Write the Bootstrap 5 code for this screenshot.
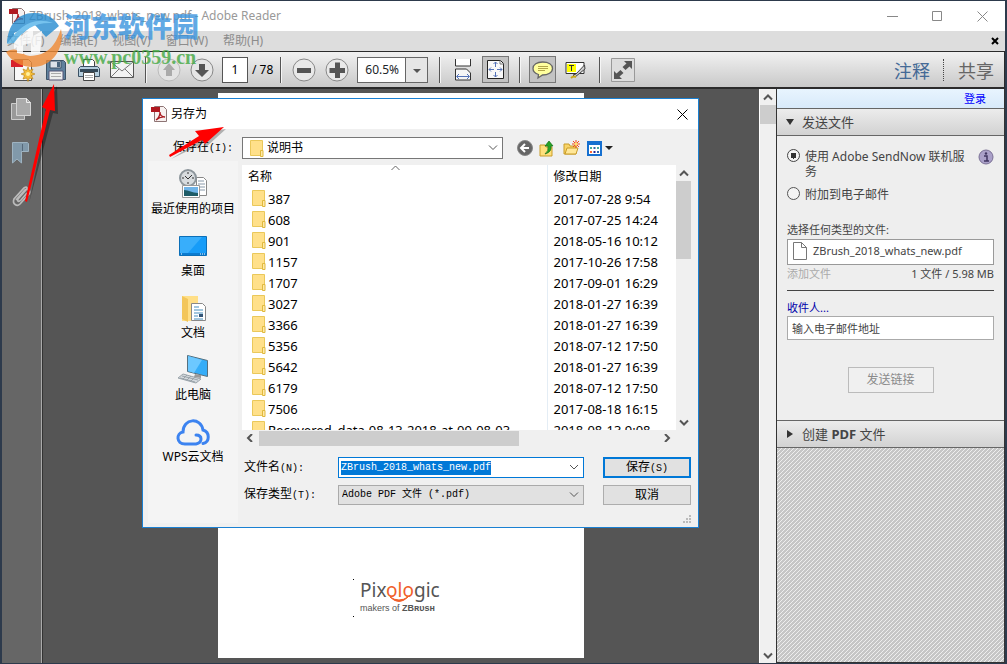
<!DOCTYPE html>
<html lang="zh-CN">
<head>
<meta charset="utf-8">
<meta name="viewport" content="width=device-width, initial-scale=1">
<title>ZBrush_2018_whats_new.pdf - Adobe Reader</title>
<link href="https://cdn.jsdelivr.net/npm/bootstrap@5.3.0/dist/css/bootstrap.min.css" rel="stylesheet">
<style>
:root{--ui:"Noto Sans","Noto Sans CJK SC",sans-serif;--cjk:"Noto Sans CJK SC",sans-serif;--mono:"Liberation Mono","Noto Sans CJK SC",monospace}
body{font-family:var(--ui);font-size:12px;line-height:16px;color:#000;background:#2d3a4c}
svg{display:block;flex:none}
button{font-family:inherit}
.app{min-height:100vh;padding:1px 2px 1px 2px}
.title-bar{height:30px;background:#fff;color:#999;padding-left:7px}
.title-bar .caption{font-size:12px}
.win-btn{width:45px;height:29px;border:0;background:none;padding:0;display:grid;place-items:center}
.menu-bar{height:20px;background:#ddd;padding:0 6px 0 5px}
.menu-list{gap:15px}
.menu-bar a{color:#8c8c8c;text-decoration:none;font-size:12px}
.tool-bar{height:38px;border:1px solid #2b2b2b;border-width:1px 1px 2px 0;background:linear-gradient(#f1f1f1,#c9c9c9);padding-left:4px}
.tool{width:33px;height:33px;border:0;background:none;padding:0;display:grid;place-items:center;flex:none}
.tool.pressed svg{background:#c3c3c3;outline:1px solid #777}
.sep{width:14px;height:26px;flex:none;display:flex;justify-content:center}
.sep::before{content:"";width:1px;background:#555;box-shadow:1px 0 #f6f6f6}
.page-no{width:26px;height:26px;border:1px solid #555;border-radius:0;background:#fff;text-align:center;font-size:12px;padding:0}
.zoom-sel{width:71px;height:26px;border:1px solid #666;border-radius:0;font-size:12px;line-height:16px;padding:0 0 0 7px;background:#fff url("data:image/svg+xml,%3Csvg xmlns='http://www.w3.org/2000/svg' width='22' height='24'%3E%3Cpath fill='%23e6e6e6' d='M0 0h22v24H0z'/%3E%3Cpath stroke='%23666' d='M.5 0v24'/%3E%3Cpath fill='%23555' d='M8 11h8l-4 4z'/%3E%3C/svg%3E") no-repeat right center;background-size:22px 24px}
.mode{font:18px/22px var(--cjk);border:0;background:none;color:#666;padding:0 10px 0 14px}
.mode.active{color:#456a96;padding-right:13px}
.mode + .mode{border-left:1px dotted #444}
.nav-rail{width:40px;background:#666;border-right:1px solid #aaa;padding-top:9px}
.nav-rail button{width:37px;height:43px;padding:0;border:0;background:none;display:flex;justify-content:center;align-items:flex-start}
.canvas{background:#555;border-left:1px solid #333;padding:4px 0 5px;min-width:0}
.sheet{width:366px;background:#fff;padding-bottom:41px}
.logo-box{width:96px;padding:0 5px 4px 7px;position:relative}
.logo-box::before,.logo-box::after{content:"";position:absolute;left:0;width:1px;height:1px;background:#000}
.logo-box::before{top:0}.logo-box::after{bottom:0}
.logo-word{font-size:19px;line-height:22px;color:#555;margin-bottom:2px}
.logo-word b{font-weight:400;color:#f0602a}
.logo-sub{font:8px/10px "Liberation Sans",sans-serif;font-size:9px;color:#555;white-space:nowrap}
.bar-v{background:#f0f0f0}
.doc-scroll{width:17px;border-left:1px solid #fff}
.thumb{background:#cdcdcd}
.arrow{display:grid;place-items:center;width:100%;height:16px;flex:none}
.side{width:229px;border:1px solid #333;border-top:0;color:#444;background:#eee}
.sign-in{height:19px;background:linear-gradient(#e8f4fe,#d8eafa);text-align:right;padding:2px 18px 0 0;font-size:11px}
.sign-in a{color:#00f;text-decoration:none}
.sec-head{height:28px;border:0;border-top:1px solid #666;border-bottom:1px solid #666;background:linear-gradient(#ececec,#d2d2d2);color:#444;font-size:13px;width:100%;padding:0 0 0 9px;text-align:left}
.sec-body{background:#eee;padding:13px 10px 27px}
.opt{position:relative;min-height:0;margin:0;padding:0 0 0 18px;line-height:15px}
.opt .form-check-input{width:13px;height:13px;margin:0 0 0 -18px;border:1px solid #555;background-color:#f4f4f4;box-shadow:none}
.opt .form-check-input:checked{border-color:#444;background:#f4f4f4 radial-gradient(circle,#333 0 3px,#f4f4f4 3px)}
.small-cjk{font-size:11px;line-height:16px}
.file-box{height:26px;margin:1px 0;background:#fff;border:1px solid #999;padding:0 5px 2px;gap:6px;font-size:11px}
.side hr{margin:8px 0 9px;opacity:1;border-top:1px solid #444}
.mail{height:24px;border:1px solid #aaa;border-radius:0;font-size:11px;padding:0 4px;width:100%;color:#333}
.mail::placeholder{color:#444;opacity:1}
.send{width:86px;height:26px;border:1px solid #bbb;background:#f0f0f0;color:#8a8a8a;font-size:12px;padding:0}
.send-row{padding-top:27px}
.hatch{background:linear-gradient(135deg,#eee 12.5%,#c6c6c6 12.5% 50%,#eee 50% 62.5%,#c6c6c6 62.5%) 0 0/4px 4px}
/* save dialog floats over the document window */
.dlg{position:absolute;left:142px;top:98px;width:557px;border:1px solid #1a80d2;background:#f0f0f0;z-index:5}
.dlg-title{height:30px;background:#fff;padding-left:8px}
.dlg-main{padding:0 7px 4px 5px}
.look{height:32px;padding-top:6px}
.look-label{width:94px;padding-right:9px;text-align:right}
.m{font-family:var(--mono);font-size:10px}
.folder-sel{width:261px;height:22px;border:1px solid #777;background:#fff;position:relative}
.folder-sel svg{position:absolute;left:7px;top:2px}
.dlg select.form-select{height:100%;border-radius:0;font-size:12px;line-height:16px;color:#000;padding:0 20px 0 24px;border:0;background:transparent url("data:image/svg+xml,%3Csvg xmlns='http://www.w3.org/2000/svg' width='10' height='6'%3E%3Cpath d='M1 .5l4 4 4-4' fill='none' stroke='%23555'/%3E%3C/svg%3E") no-repeat right 4px center;background-size:10px 6px}
.dlg .type-sel select.form-select{font:10px/14px var(--mono);padding:0 20px 0 3px;border:1px solid #aaa;background-color:#e1e1e1}
.ico-btn{width:24px;height:22px;border:0;padding:0;background:none;display:grid;place-items:center}
.places{width:90px;background:#f4f4f4;padding-top:7px}
.place{height:62px;width:100%;border:0;background:none;padding:0;display:flex;flex-direction:column;align-items:center;gap:1px;white-space:nowrap;color:#000;line-height:16px}
.list-col{min-width:0}
.files{height:265px;background:#fff;overflow:hidden}
.files table{width:100%;table-layout:fixed;border-collapse:collapse}
.files th{height:23px;font-weight:400;padding:0 6px}
.files td{height:21px;font-size:13px;line-height:16px;padding:0 6px;white-space:nowrap}
.files td:first-child{padding-left:10px}
.files td svg{display:inline-block;vertical-align:-3px;margin-right:2px}
.files tr > :nth-child(2){border-left:1px solid #e4edf5}
.list-scroll{width:15px;flex:none}
.fields{display:grid;grid-template-columns:96px 1fr 88px;grid-template-rows:21px 20px;row-gap:7px;padding-top:11px;align-items:center}
.fields label{padding-left:2px}
.fields > div{margin-right:19px;height:100%}
.name-box{border:1px solid #0078d7;background:#fff;display:flex;align-items:center}
.name-box input{flex:1;min-width:0;border:0;outline:0;padding:0 2px;font:10px/14px var(--mono);height:14px}
.name-box input::selection{background:#0078d7;color:#fff}
.fields button{height:100%;border:1px solid #adadad;background:#e1e1e1;padding:0;line-height:16px}
.fields button.default{border:2px solid #0078d7}
.grip{padding-top:10px}
.over{position:absolute;pointer-events:none;z-index:9}
.mark-layer{left:4px;top:9px;opacity:.8}
.mark-name{font:900 27px/34px "Noto Sans CJK SC",sans-serif;color:#3a94de}
.mark-url{font:700 20px/20px "Liberation Serif",serif;color:#44a944}
</style>
</head>
<body>
<svg width="0" height="0" class="position-absolute" aria-hidden="true">
  <defs>
    <symbol id="folder" viewBox="0 0 14 17"><path d="M.5.5h12v15H.5z" fill="#ffe08a" stroke="#eac85a"/><path d="M10.500 10.500h2.500v6h-2.500z" fill="#ffe9a8" stroke="#e0b93d"/></symbol>
    <symbol id="pdf" viewBox="0 0 16 16"><path d="M3.500.5h9l3 3v12h-12z" fill="#f7f1f0" stroke="#8d7474"/><path d="M0 1h9v5H0z" fill="#b01820"/><path d="M5 14c3-2 4-5 4-8 0 3 2 5 5 5-3-.5-6 .5-9 3z" fill="none" stroke="#a81a20" stroke-width="1.300"/></symbol>
    <symbol id="up" viewBox="0 0 10 7"><path d="M1 5.500l4-4 4 4" fill="none" stroke="#555" stroke-width="2"/></symbol>
    <symbol id="down" viewBox="0 0 10 7"><path d="M1 1.500l4 4 4-4" fill="none" stroke="#555" stroke-width="2"/></symbol>
  </defs>
</svg>

<div class="app d-flex flex-column position-relative">
  <header class="title-bar d-flex align-items-center">
    <svg width="16" height="16"><use href="#pdf"/></svg>
    <span class="caption ms-1 me-auto">ZBrush_2018_whats_new.pdf - Adobe Reader</span>
    <button class="win-btn" aria-label="最小化"><svg width="11" height="11"><path d="M0 5.500h11" stroke="#888"/></svg></button>
    <button class="win-btn" aria-label="最大化"><svg width="11" height="11"><path d="M.5.5h9v9h-9z" fill="none" stroke="#888"/></svg></button>
    <button class="win-btn" aria-label="关闭"><svg width="11" height="11"><path d="M.5.500l10 10m0-10l-10 10" stroke="#888"/></svg></button>
  </header>
  <nav class="menu-bar d-flex align-items-center">
    <div class="menu-list d-flex me-auto"><a href="#">文件(F)</a><a href="#">编辑(E)</a><a href="#">视图(V)</a><a href="#">窗口(W)</a><a href="#">帮助(H)</a></div>
    <a href="#" aria-label="关闭文档"><svg width="8" height="8"><path d="M1 1l6 6m0-6L1 7" stroke="#000" stroke-width="2"/></svg></a>
  </nav>

  <div class="tool-bar d-flex align-items-center">
    <button class="tool" aria-label="创建"><svg width="24" height="24"><path d="M3.500 1.500h14l3 3v18h-17z" fill="#f8f8f8" stroke="#555"/><path d="M0 2h12v7H0z" fill="#d8222c"/><path d="M17 9l1.500 3.500L22 11l-1.500 3.500L24 16l-3.500 1.500L22 21l-3.500-1L17 23.500 15.500 20 12 21l1.500-3.500L10 16l3.500-1.500L12 11l3.500 1.500z" fill="#f4bd3a" stroke="#b47a10" stroke-width=".6"/><circle cx="17" cy="16" r="2" fill="#fff0a0"/></svg></button>
    <button class="tool" aria-label="保存"><svg width="22" height="22"><path d="M1.500 1.500h17l2 2v17h-19z" fill="#5f819d" stroke="#3c5267"/><path d="M5 2h11v7H5z" fill="#dde3e8" stroke="#3c5267"/><path d="M12 3h3v5h-3z" fill="#4a657c"/><path d="M4 12h14v9H4z" fill="#eee" stroke="#557"/><path d="M6 14.500h10m-10 3h10" stroke="#aaa"/></svg></button>
    <button class="tool" aria-label="打印"><svg width="22" height="24"><path d="M5.500 9v-7.500h9l2 2V9" fill="#fff" stroke="#444"/><path d="M2.500 8.500h17l2 2v8h-21v-8z" fill="#b4cddd" stroke="#3b5063"/><path d="M2 11h18v3H2z" fill="#344959"/><path d="M5.500 14.500h11v8h-11z" fill="#fff" stroke="#444"/><path d="M7 17.500h8m-8 2h8" stroke="#aaa"/></svg></button>
    <button class="tool" aria-label="电子邮件"><svg width="24" height="18"><path d="M.5.500h23v16H.5z" fill="#f3f3f3" stroke="#555"/><path d="M1 1l11 9L23 1M1 16l8-8m14 8l-8-8" fill="none" stroke="#777"/></svg></button>
    <span class="sep"></span>
    <button class="tool" disabled aria-label="上一页"><svg width="24" height="24"><circle cx="12" cy="12" r="11" fill="#e3e3e3" stroke="#bbb"/><path d="M12 5l6 7h-3v6H9v-6H6z" fill="#aaa"/></svg></button>
    <button class="tool" aria-label="下一页"><svg width="24" height="24"><circle cx="12" cy="12" r="11" fill="#e6e6e6" stroke="#888"/><path d="M12 19l-7-7h4V6h6v6h4z" fill="#555"/></svg></button>
    <input class="page-no ms-1" value="1" aria-label="页码"><span class="ms-1">/ 78</span>
    <span class="sep"></span>
    <button class="tool" aria-label="缩小"><svg width="24" height="24"><circle cx="12" cy="12" r="11" fill="#e9e9e9" stroke="#888"/><path d="M5 10h14v5H5z" fill="#555"/></svg></button>
    <button class="tool" aria-label="放大"><svg width="24" height="24"><circle cx="12" cy="12" r="11" fill="#e9e9e9" stroke="#888"/><path d="M4.500 10H10V4.500h5V10h5v5h-5v5h-5v-5H4.500z" fill="#555"/></svg></button>
    <select class="form-select zoom-sel mx-1" aria-label="缩放"><option>60.5%</option></select>
    <span class="sep"></span>
    <button class="tool" aria-label="适合宽度"><svg width="18" height="22"><path d="M1.500 0v7h15V0" fill="#fff" stroke="#333"/><path d="M1.500 21v-11h11l4 4v7z" fill="#f6f6f6" stroke="#333"/><path d="M3 17.500h12M5 15l-2.500 2.500L5 20m8-5l2.500 2.500L13 20" fill="none" stroke="#5573b8"/></svg></button>
    <button class="tool pressed" aria-label="适合页面"><svg width="25" height="25"><path d="M4.500 3.500h13l3 3v15h-16z" fill="#f8f8f8" stroke="#222"/><path d="M17 3.500V7h3.500" fill="none" stroke="#777"/><path d="M12.500 5v5m0 5v5M6 12.500h5m3 0h5M10.500 7l2-2 2 2m-4 11l2 2 2-2M8 10.500l-2 2 2 2m9-4l2 2-2 2" fill="none" stroke="#5573b8"/></svg></button>
    <span class="sep"></span>
    <button class="tool pressed" aria-label="注释"><svg width="25" height="25"><path d="M12.500 5c6 0 10 2.500 10 6.500S18 18 12.500 18L8 21l.500-3.500C5 16.500 3 14.500 3 11.500 3 7.500 7 5 12.500 5z" fill="#ffff9e" stroke="#666" stroke-width="1.300"/><path d="M8 9.500h10m-10 2h10m-10 2h7" stroke="#b3a648"/></svg></button>
    <button class="tool" aria-label="高亮文本"><svg width="22" height="20"><path d="M1 2.500h18v11H1z" fill="#fff" stroke="#333"/><path d="M2 4h9v8H2z" fill="#ff0"/><path d="M4 5.500h5m-2.500 0V11" stroke="#333"/><path d="M19.500 5L11 14l-3 1 2 2 10-8z" fill="#ccc" stroke="#444"/><path d="M6 18c2-2 3-2 5-1" fill="none" stroke="#caa817" stroke-width="2"/></svg></button>
    <span class="sep"></span>
    <button class="tool" aria-label="全屏"><svg width="24" height="24"><path d="M.5.500h23v23H.5z" fill="#ddd" stroke="#999"/><path d="M13 3h8v8l-2.500-2.500-4 3.500-3-3 4-3.500zM3 13l2.500 2.500 4-3.500 3 3-4 3.500L11 21H3z" fill="#555"/></svg></button>
    <div class="ms-auto d-flex"><button class="mode active">注释</button><button class="mode">共享</button></div>
  </div>

  <div class="d-flex flex-fill">
    <aside class="nav-rail">
      <button aria-label="页面缩略图"><svg width="22" height="23"><path d="M1.500 5.500h13v16h-13z" fill="#999" stroke="#ccc"/><path d="M6.500.5h10l4 4v13h-14z" fill="#aaa" stroke="#d4d4d4"/><path d="M16.500.5v4h4" fill="none" stroke="#eee"/></svg></button>
      <button aria-label="书签"><svg width="20" height="24"><path d="M1.500 1.500h15l1 1v8h-7V22l-4.500-4-4.500 4z" fill="#8199aa" stroke="#9eb3c1"/><path d="M11.500 10V3" stroke="#56697a"/></svg></button>
      <button aria-label="附件"><svg width="22" height="24"><path d="M6 16L15 6c3-2 6 1 4 4l-9 10c-3 3-8 0-6-5L14 4c3-2 4 0 2 2L8 15c-1 3 1 3 3 1l6-7" fill="none" stroke="#bbb" stroke-width="1.700"/></svg></button>
    </aside>
    <main class="canvas flex-fill d-flex justify-content-center">
      <article class="sheet d-flex flex-column justify-content-end align-items-center">
        <div class="logo-box">
          <div class="logo-word position-relative">Pix<b>olo</b>gic<svg class="position-absolute top-50 start-0" width="80" height="13"><path d="M30 7q9 6 18 0-9 9-18 0z" fill="#f0602a" stroke="#f0602a"/></svg></div>
          <div class="logo-sub">makers of <b>ZBʀᴜsʜ</b></div>
        </div>
      </article>
    </main>
    <div class="doc-scroll bar-v d-flex flex-column">
      <span class="arrow"><svg width="10" height="7"><use href="#up"/></svg></span>
      <div class="thumb" style="height:19px"></div>
      <span class="arrow mt-auto"><svg width="10" height="7"><use href="#down"/></svg></span>
    </div>

    <aside class="side d-flex flex-column">
      <div class="sign-in"><a href="#">登录</a></div>
      <button class="sec-head d-flex align-items-center gap-2"><svg width="8" height="8"><path d="M0 1h8L4 7z" fill="#333"/></svg>发送文件</button>
      <form class="sec-body">
        <div class="d-flex">
          <div class="opt form-check flex-fill"><input class="form-check-input" type="radio" name="how" id="how1" checked><label for="how1">使用 Adobe SendNow 联机服务</label></div>
          <svg class="ms-2" width="16" height="16"><circle cx="8" cy="8" r="7" fill="#aaa0c8" stroke="#7a7095"/><circle cx="8" cy="4.500" r="1.200" fill="#403560"/><path d="M6 7h3v5m-3 0h5" fill="none" stroke="#403560" stroke-width="1.500"/></svg>
        </div>
        <div class="opt form-check mt-2"><input class="form-check-input" type="radio" name="how" id="how2"><label for="how2">附加到电子邮件</label></div>
        <div class="small-cjk mt-3 pt-1">选择任何类型的文件:</div>
        <div class="file-box d-flex align-items-center"><svg width="14" height="18"><path d="M.5.500h8l5 5v12H.5z" fill="#fff" stroke="#777"/><path d="M8.500.5v5h5" fill="none" stroke="#777"/></svg>ZBrush_2018_whats_new.pdf</div>
        <div class="small-cjk d-flex justify-content-between"><span style="color:#aaa">添加文件</span><span>1 文件 / 5.98 MB</span></div>
        <hr>
        <label class="small-cjk d-block" for="to"><a href="#" class="text-decoration-none" style="color:#00a">收件人...</a></label>
        <input class="mail" id="to" placeholder="输入电子邮件地址">
        <div class="send-row text-center"><button type="button" class="send">发送链接</button></div>
      </form>
      <button class="sec-head d-flex align-items-center gap-2"><svg width="8" height="8"><path d="M1 0v8l6-4z" fill="#333"/></svg><span>创建 <b>PDF</b> 文件</span></button>
      <div class="hatch flex-fill"></div>
    </aside>
  </div>

  <section class="dlg" role="dialog" aria-label="另存为">
    <div class="dlg-title d-flex align-items-center">
      <svg width="16" height="16"><use href="#pdf"/></svg><span class="ms-1 me-auto">另存为</span>
      <button class="win-btn" style="width:32px" aria-label="关闭"><svg width="11" height="11"><path d="M.5.500l10 10m0-10l-10 10" stroke="#000"/></svg></button>
    </div>
    <div class="dlg-main">
      <div class="look d-flex align-items-center">
        <label class="look-label" for="dir">保存在<span class="m">(I):</span></label>
        <div class="folder-sel"><svg width="14" height="17"><use href="#folder"/></svg><select class="form-select" id="dir"><option>说明书</option></select></div>
        <button class="ico-btn ms-2 ps-1" aria-label="后退"><svg width="16" height="16"><circle cx="8" cy="8" r="7.500" fill="#666" stroke="#888"/><path d="M8 4L4 8l4 4M4 8h8" fill="none" stroke="#fff" stroke-width="2"/></svg></button>
        <button class="ico-btn" aria-label="向上"><svg width="16" height="17"><path d="M1 5h5l1 2h6v9H1z" fill="#ffe07c" stroke="#c99c28"/><path d="M6 14q4-3 3-8H6l4-5 4 5h-2q1 6-6 8z" fill="#25a525" stroke="#176d17" stroke-width=".7"/></svg></button>
        <button class="ico-btn" aria-label="新建文件夹"><svg width="17" height="16"><path d="M1 4h5l1 2h6v8H1z" fill="#f8d469" stroke="#c99c28"/><path d="M2 14l2-6h11l-2 6z" fill="#ffe798" stroke="#c99c28"/><path d="M13 0v8m-4-4h8m-7-3l6 6m0-6l-6 6" stroke="#f04a20"/><circle cx="13" cy="4" r="1.500" fill="#ffe36a"/></svg></button>
        <button class="ico-btn ms-1 w-auto" aria-label="视图"><svg width="26" height="15"><path d="M1 1h13v13H1z" fill="#fff" stroke="#1670d0" stroke-width="2"/><path d="M0 0h15v4H0z" fill="#1670d0"/><path d="M3 6h2v2H3zm7 0h2v2h-2z" fill="#4a9"/><path d="M6.500 6h2v2h-2zM10 10h2v2h-2z" fill="#36a"/><path d="M3 10h2v2H3z" fill="#f63"/><path d="M6.500 10h2v2h-2z" fill="#229"/><path d="M18 5h8l-4 4z" fill="#222"/></svg></button>
      </div>
      <div class="d-flex">
        <div class="places flex-shrink-0">
          <button class="place"><svg width="32" height="32"><path d="M19.500 9.500h7l3 3v15h-10z" fill="#fff" stroke="#888"/><path d="M21 13h6m-6 3h7m-7 3h7m-7 3h7" stroke="#89a"/><circle cx="11" cy="10" r="8" fill="#d8dcdf" stroke="#8d969c" stroke-width="2"/><path d="M11 4v2m0 8v2M5 10h2m8 0h2m-9-2l3 3 4-4" fill="none" stroke="#333"/><path d="M5.500 17.500h17v12h-17z" fill="#fff" stroke="#999"/><path d="M7 19h14v9H7z" fill="#70b4e8"/><path d="M7 22c5 0 8 3 14 3v3H7z" fill="#1d5b66"/></svg><span>最近使用的项目</span></button>
          <button class="place"><svg width="32" height="32"><path d="M2.500 6.500h27v19h-27z" fill="#169cf8" stroke="#0b6fb8"/><path d="M3 7h22L11 23H3z" fill="#38aefb"/><path d="M3 23h26v2H3z" fill="#0a7bd0"/><path d="M4 24h2m17 0h5" stroke="#fff" stroke-dasharray="1 1"/></svg><span>桌面</span></button>
          <button class="place"><svg width="32" height="32"><path d="M5 4h16v24l-6 1H5z" fill="#ffdf87"/><path d="M5 4l6 3v23l-6-3z" fill="#f3c65a"/><path d="M14.500 11.500h11l3 3v14h-14z" fill="#fff" stroke="#888"/><path d="M17 15h5m-5 3h9m-9 3h9m-9 3h4m-4 3h9" stroke="#468fbd"/><path d="M22 22h4v3h-4z" fill="#357"/></svg><span>文档</span></button>
          <button class="place"><svg width="32" height="32"><path d="M10.500 1.500l20 5v16l-20-5z" fill="#35adf8" stroke="#55707f"/><path d="M11 2l14 4-8 13-6-2z" fill="#6cc8ff"/><path d="M18 20l-1 3 7 1v-3z" fill="#999"/><path d="M6 20l18 5-5 4-18-5z" fill="#d5dade" stroke="#9aa4aa"/><path d="M5 22l16 4M3 24l15 4M10 21l-4 4m8-3l-4 4m8-3l-4 4" stroke="#9aa4aa"/></svg><span>此电脑</span></button>
          <button class="place"><svg width="34" height="32"><path d="M17 28H9C0 28 0 17 7 16 7 2 25 1 27 14c7 2 7 12 0 13.500M14 28h6q5-1 5-5t-5-4" fill="none" stroke="#3c83f0" stroke-width="3" stroke-linecap="round"/></svg><span>WPS云文档</span></button>
        </div>
        <div class="flex-fill ms-1 mt-1">
          <div class="d-flex">
            <div class="list-col flex-fill">
              <div class="files">
                <table>
                  <colgroup><col><col style="width:129px"></colgroup>
                  <thead><tr><th>名称</th><th>修改日期</th></tr></thead>
                  <tbody id="rows"></tbody>
                </table>
              </div>
              <div class="bar-v d-flex align-items-center">
                <svg class="m-1" width="9" height="8"><path d="M6 0L2 4l4 4" fill="none" stroke="#555" stroke-width="2"/></svg>
                <div class="thumb" style="width:60%;height:15px"></div>
                <svg class="ms-auto me-1" width="9" height="8"><path d="M2 0l4 4-4 4" fill="none" stroke="#555" stroke-width="2"/></svg>
              </div>
            </div>
            <div class="list-scroll bar-v d-flex flex-column mb-3">
              <span class="arrow"><svg width="10" height="7"><use href="#up"/></svg></span>
              <div class="thumb" style="height:78px"></div>
              <span class="arrow mt-auto"><svg width="10" height="7"><use href="#down"/></svg></span>
            </div>
          </div>
          <form class="fields">
            <label for="fn">文件名<span class="m">(N):</span></label>
            <div class="name-box"><input id="fn" value="ZBrush_2018_whats_new.pdf"><svg class="me-1" width="10" height="7"><path d="M1 1l4 4 4-4" fill="none" stroke="#555"/></svg></div>
            <button type="button" class="default">保存<span class="m">(S)</span></button>
            <label for="ft">保存类型<span class="m">(T):</span></label>
            <div class="type-sel"><select class="form-select" id="ft"><option>Adobe PDF 文件 (*.pdf)</option></select></div>
            <button type="button">取消</button>
          </form>
          <div class="grip d-flex justify-content-end"><svg width="8" height="8"><path d="M6 0h2v2H6zM3 3h2v2H3zm3 0h2v2H6zM0 6h2v2H0zm3 0h2v2H3zm3 0h2v2H6z" fill="#bbb"/></svg></div>
        </div>
      </div>
    </div>
    <svg class="over" style="left:248px;top:66px" width="9" height="6"><path d="M.5 5l4-4 4 4" fill="none" stroke="#666"/></svg>
  </section>

  <div class="over mark-layer d-flex">
    <svg width="60" height="60"><path d="M3 34C4 15 15 3 31 4c11 0 19 5 24 13L42 28 30 15 8 33z" fill="#268cd0"/><path d="M2 43c12-7 14 3 24 4 17-1 25-9 31-27 4 18-8 38-28 38C17 58 7 52 2 43z" fill="#f08a34"/><path d="M10 40V24l7-3v6l12-8v8l9-5-2 22-9 1V34l-8 2v9l-6-1v-6z" fill="#fff"/><path d="M3 35C15 18 28 7 49 14 31 13 20 20 10 34z" fill="#55b4ea"/></svg>
    <div><div class="mark-name">河东软件园</div><div class="mark-url mt-1">www.pc0359.cn</div></div>
  </div>
  <svg class="over" style="left:16px;top:82px" width="50" height="124"><path d="M10 119L29 28l-3-1L38 2l1 28-5-1z" fill="#0005" transform="translate(3 2)"/><path d="M9 119L30 27l-4-2L38 2l1 27-5-1-23 92z" fill="#f00"/></svg>
  <svg class="over" style="left:165px;top:122px" width="66" height="42"><path d="M4 34l33-21-4-5 26-4-20 18-2-4z" fill="#0004" transform="translate(2 3)"/><path d="M4 33l30-19-4-5 29-4-19 17-3-4-32 17z" fill="#f00"/></svg>
</div>
<script src="https://cdn.jsdelivr.net/npm/bootstrap@5.3.0/dist/js/bootstrap.bundle.min.js"></script>
<script>
const files = [["387","2017-07-28 9:54"],["608","2017-07-25 14:24"],["901","2018-05-16 10:12"],["1157","2017-10-26 17:58"],["1707","2017-09-01 16:29"],["3027","2018-01-27 16:39"],["3366","2018-01-27 16:39"],["5356","2018-07-12 17:50"],["5642","2018-01-27 16:39"],["6179","2018-07-12 17:50"],["7506","2017-08-18 16:15"],["Recovered_data-08-13-2018-at-09-08-03","2018-08-13 9:08"]];
document.getElementById("rows").innerHTML = files.map(([n, d]) => `<tr><td><svg width="14" height="17"><use href="#folder"/></svg>${n}</td><td>${d}</td></tr>`).join("");
document.getElementById("fn").select();
</script>
</body>
</html>
